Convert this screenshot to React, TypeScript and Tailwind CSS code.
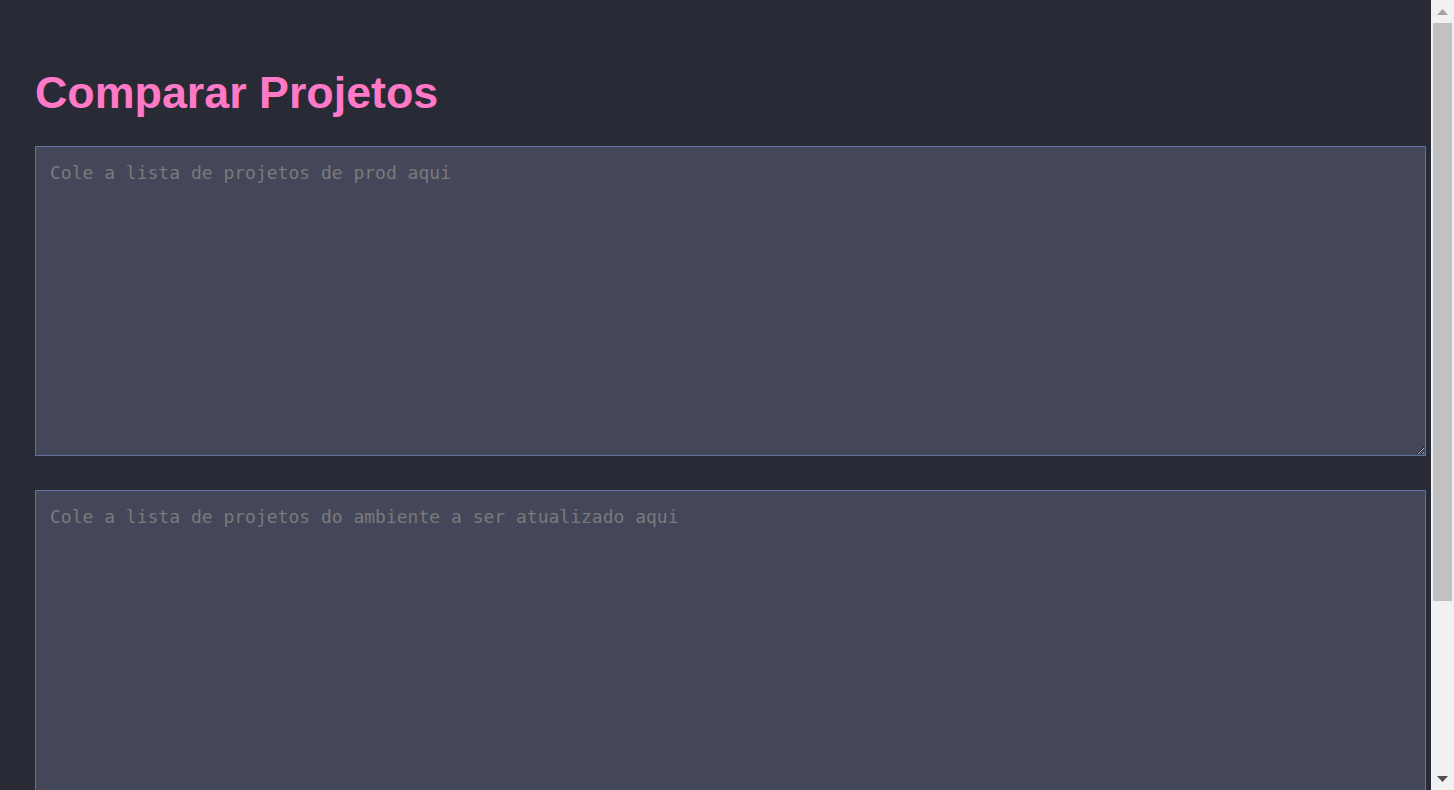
import { useState } from 'react';

// Página simples de comparação de listas de projetos (tema escuro)
export default function App() {
  const [prod, setProd] = useState('');
  const [target, setTarget] = useState('');

  const areaClass =
    "block w-full h-[310px] bg-[#44475a] border border-[#6272a4] pl-[14px] pr-[13px] pt-[15px] pb-[11px] text-[18px] leading-[21px] text-[#f8f8f2] font-['DejaVu_Sans_Mono',monospace] placeholder:text-[#7a7a7a] outline-none";

  return (
    <div className="flex h-screen overflow-hidden bg-[#282a36]">
      <main className="flex-1 min-w-0 pl-[35px] pr-[5px] pt-[67px] font-['Liberation_Sans',Arial,sans-serif]">
        <h1 className="text-[44.8px] leading-[50px] font-bold text-[#ff79c6] mb-[29px]">
          Comparar Projetos
        </h1>

        <div className="flex flex-col gap-[34px]">
          <textarea
            value={prod}
            onChange={(e) => setProd(e.target.value)}
            placeholder="Cole a lista de projetos de prod aqui"
            className={areaClass}
          />
          <textarea
            value={target}
            onChange={(e) => setTarget(e.target.value)}
            placeholder="Cole a lista de projetos do ambiente a ser atualizado aqui"
            className={areaClass}
          />
        </div>
      </main>

      {/* barra de rolagem da janela */}
      <aside className="w-[23px] shrink-0 bg-[#f1f1f1] flex flex-col">
        <div className="h-[23px] flex items-center justify-center">
          <svg width="11" height="6" viewBox="0 0 11 6">
            <polygon points="5.5,0 11,6 0,6" fill="#a3a3a3" />
          </svg>
        </div>
        <div className="flex-1 px-[2px]">
          <div className="h-[578px] bg-[#c1c1c1]" />
        </div>
        <div className="h-[23px] flex items-center justify-center">
          <svg width="11" height="6" viewBox="0 0 11 6">
            <polygon points="0,0 11,0 5.5,6" fill="#505050" />
          </svg>
        </div>
      </aside>
    </div>
  );
}
